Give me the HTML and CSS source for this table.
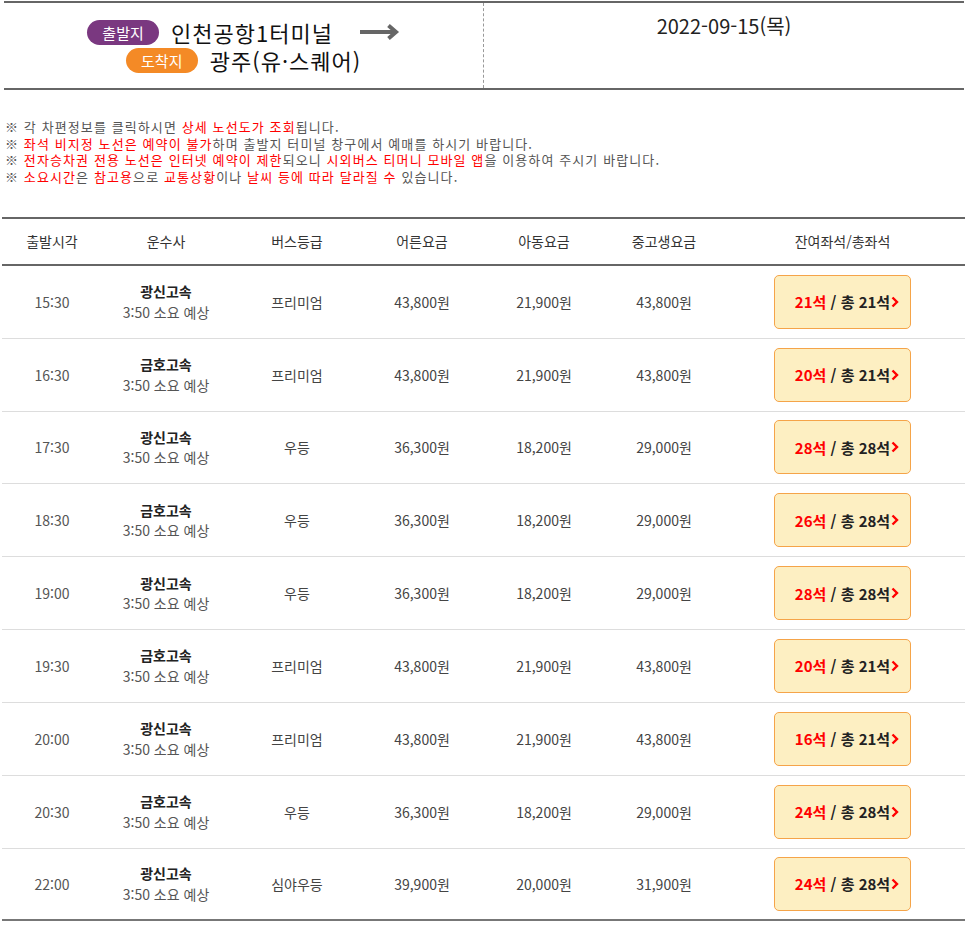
FILE: index.html
```html
<!DOCTYPE html>
<html lang="ko">
<head>
<meta charset="utf-8">
<title>배차 조회</title>
<link rel="stylesheet" href="styles.css">
</head>
<body>
<div class="page">
  <div class="route">
    <div class="route-left">
      <div class="route-line">
        <span class="badge badge-dep">출발지</span>
        <span class="place">인천공항1터미널</span>
        <svg class="route-arrow" width="40" height="18" viewBox="0 0 40 18" aria-hidden="true">
          <path d="M0 9 H36" stroke="#666" stroke-width="4" fill="none"/>
          <path d="M28.5 2.5 L36 9 L28.5 15.5" stroke="#666" stroke-width="4" fill="none"/>
        </svg>
      </div>
      <div class="route-line">
        <span class="badge badge-arr">도착지</span>
        <span class="place">광주(유·스퀘어)</span>
      </div>
    </div>
    <div class="route-right">
      <span class="date">2022-09-15(목)</span>
    </div>
  </div>

  <ul class="notes">
    <li>※ 각 차편정보를 클릭하시면 <em>상세 노선도가 조회</em>됩니다.</li>
    <li>※ <em>좌석 비지정 노선은 예약이 불가</em>하며 출발지 터미널 창구에서 예매를 하시기 바랍니다.</li>
    <li>※ <em>전자승차권 전용 노선은 인터넷 예약이 제한</em>되오니 <em>시외버스 티머니 모바일 앱</em>을 이용하여 주시기 바랍니다.</li>
    <li>※ <em>소요시간</em>은 <em>참고용</em>으로 <em>교통상황</em>이나 <em>날씨 등에 따라 달라질 수</em> 있습니다.</li>
  </ul>

  <div class="bus-table">
    <div class="thead">
      <div>출발시각</div><div>운수사</div><div>버스등급</div><div>어른요금</div><div>아동요금</div><div>중고생요금</div><div>잔여좌석/총좌석</div>
    </div>

    <div class="row">
      <div class="time">15:30</div>
      <div class="company"><strong>광신고속</strong><span>3:50 소요 예상</span></div>
      <div>프리미엄</div><div>43,800원</div><div>21,900원</div><div>43,800원</div>
      <div><button class="seat-btn"><em>21석</em>&nbsp;/ 총 21석<svg class="chev" width="8" height="12" viewBox="0 0 8 12"><path d="M1.5 1.5 L6 6 L1.5 10.5" stroke="#f00" stroke-width="2.4" fill="none"/></svg></button></div>
    </div>
    <div class="row">
      <div class="time">16:30</div>
      <div class="company"><strong>금호고속</strong><span>3:50 소요 예상</span></div>
      <div>프리미엄</div><div>43,800원</div><div>21,900원</div><div>43,800원</div>
      <div><button class="seat-btn"><em>20석</em>&nbsp;/ 총 21석<svg class="chev" width="8" height="12" viewBox="0 0 8 12"><path d="M1.5 1.5 L6 6 L1.5 10.5" stroke="#f00" stroke-width="2.4" fill="none"/></svg></button></div>
    </div>
    <div class="row">
      <div class="time">17:30</div>
      <div class="company"><strong>광신고속</strong><span>3:50 소요 예상</span></div>
      <div>우등</div><div>36,300원</div><div>18,200원</div><div>29,000원</div>
      <div><button class="seat-btn"><em>28석</em>&nbsp;/ 총 28석<svg class="chev" width="8" height="12" viewBox="0 0 8 12"><path d="M1.5 1.5 L6 6 L1.5 10.5" stroke="#f00" stroke-width="2.4" fill="none"/></svg></button></div>
    </div>
    <div class="row">
      <div class="time">18:30</div>
      <div class="company"><strong>금호고속</strong><span>3:50 소요 예상</span></div>
      <div>우등</div><div>36,300원</div><div>18,200원</div><div>29,000원</div>
      <div><button class="seat-btn"><em>26석</em>&nbsp;/ 총 28석<svg class="chev" width="8" height="12" viewBox="0 0 8 12"><path d="M1.5 1.5 L6 6 L1.5 10.5" stroke="#f00" stroke-width="2.4" fill="none"/></svg></button></div>
    </div>
    <div class="row">
      <div class="time">19:00</div>
      <div class="company"><strong>광신고속</strong><span>3:50 소요 예상</span></div>
      <div>우등</div><div>36,300원</div><div>18,200원</div><div>29,000원</div>
      <div><button class="seat-btn"><em>28석</em>&nbsp;/ 총 28석<svg class="chev" width="8" height="12" viewBox="0 0 8 12"><path d="M1.5 1.5 L6 6 L1.5 10.5" stroke="#f00" stroke-width="2.4" fill="none"/></svg></button></div>
    </div>
    <div class="row">
      <div class="time">19:30</div>
      <div class="company"><strong>금호고속</strong><span>3:50 소요 예상</span></div>
      <div>프리미엄</div><div>43,800원</div><div>21,900원</div><div>43,800원</div>
      <div><button class="seat-btn"><em>20석</em>&nbsp;/ 총 21석<svg class="chev" width="8" height="12" viewBox="0 0 8 12"><path d="M1.5 1.5 L6 6 L1.5 10.5" stroke="#f00" stroke-width="2.4" fill="none"/></svg></button></div>
    </div>
    <div class="row">
      <div class="time">20:00</div>
      <div class="company"><strong>광신고속</strong><span>3:50 소요 예상</span></div>
      <div>프리미엄</div><div>43,800원</div><div>21,900원</div><div>43,800원</div>
      <div><button class="seat-btn"><em>16석</em>&nbsp;/ 총 21석<svg class="chev" width="8" height="12" viewBox="0 0 8 12"><path d="M1.5 1.5 L6 6 L1.5 10.5" stroke="#f00" stroke-width="2.4" fill="none"/></svg></button></div>
    </div>
    <div class="row">
      <div class="time">20:30</div>
      <div class="company"><strong>금호고속</strong><span>3:50 소요 예상</span></div>
      <div>우등</div><div>36,300원</div><div>18,200원</div><div>29,000원</div>
      <div><button class="seat-btn"><em>24석</em>&nbsp;/ 총 28석<svg class="chev" width="8" height="12" viewBox="0 0 8 12"><path d="M1.5 1.5 L6 6 L1.5 10.5" stroke="#f00" stroke-width="2.4" fill="none"/></svg></button></div>
    </div>
    <div class="row">
      <div class="time">22:00</div>
      <div class="company"><strong>광신고속</strong><span>3:50 소요 예상</span></div>
      <div>심야우등</div><div>39,900원</div><div>20,000원</div><div>31,900원</div>
      <div><button class="seat-btn"><em>24석</em>&nbsp;/ 총 28석<svg class="chev" width="8" height="12" viewBox="0 0 8 12"><path d="M1.5 1.5 L6 6 L1.5 10.5" stroke="#f00" stroke-width="2.4" fill="none"/></svg></button></div>
    </div>
  </div>
</div>
</body>
</html>
```

FILE: styles.css
```css
* { box-sizing: border-box; }

html, body {
  margin: 0;
  padding: 0;
  background: #fff;
}

body {
  font-family: "Noto Sans CJK KR", "Noto Sans", "Liberation Sans", sans-serif;
  color: #333;
}

.page {
  width: 968px;
}

/* ---------- route header ---------- */
.route {
  display: flex;
  margin: 1px 4px 0 4px;
  height: 89px;
  border-top: 2px solid #666;
  border-bottom: 2px solid #666;
}

.route-left {
  width: 480px;
  border-right: 1px dashed #999;
  padding-top: 15px;
  display: flex;
  flex-direction: column;
  align-items: center;
}

.route-line {
  height: 28px;
  display: flex;
  align-items: center;
  gap: 12px;
}

.badge {
  display: inline-block;
  width: 72px;
  height: 25px;
  border-radius: 13px;
  color: #fff;
  font-size: 15px;
  line-height: 25px;
  text-align: center;
}

.badge-dep { background: #7a3880; }
.badge-arr { background: #f48a26; }

.place {
  font-size: 22px;
  line-height: 28px;
  color: #111;
  letter-spacing: 1px;
}

.route-arrow {
  margin-left: 15px;
  display: block;
}

.route-right {
  flex: 1;
  text-align: center;
  padding-top: 9px;
}

.date {
  font-size: 20px;
  line-height: 28px;
  color: #222;
}

/* ---------- notes ---------- */
.notes {
  list-style: none;
  margin: 29px 0 0 5px;
  padding: 0;
  font-size: 13px;
  line-height: 16.7px;
  letter-spacing: 1.1px;
  color: #555;
}

.notes em {
  font-style: normal;
  color: #f00;
}

/* ---------- bus table ---------- */
.bus-table {
  margin: 31px 3px 0 2px;
}

.thead,
.row {
  display: grid;
  grid-template-columns: 100px 128px 134px 116px 128px 112px 1fr;
  align-items: center;
  text-align: center;
}

.thead {
  height: 49px;
  border-top: 2px solid #666;
  border-bottom: 2px solid #666;
  font-size: 14px;
  color: #333;
}

.row {
  height: 72.85px;
  border-bottom: 1px solid #ddd;
  font-size: 14px;
  color: #444;
}

.row:last-child {
  border-bottom: 2px solid #777;
}

.time { color: #555; }

.company {
  display: flex;
  flex-direction: column;
  line-height: 20.5px;
}

.company strong {
  font-weight: bold;
  color: #222;
}

.company span { color: #555; }

.seat-btn {
  width: 137px;
  height: 54px;
  margin: 0 auto;
  display: flex;
  align-items: center;
  justify-content: center;
  padding: 0 0 0 9px;
  background: #fdefc2;
  border: 1px solid #f5a449;
  border-radius: 5px;
  font-family: inherit;
  font-size: 15px;
  font-weight: bold;
  color: #222;
  cursor: pointer;
}

.seat-btn em {
  font-style: normal;
  color: #f00;
}

.chev {
  display: block;
  margin-left: 1px;
}
```
